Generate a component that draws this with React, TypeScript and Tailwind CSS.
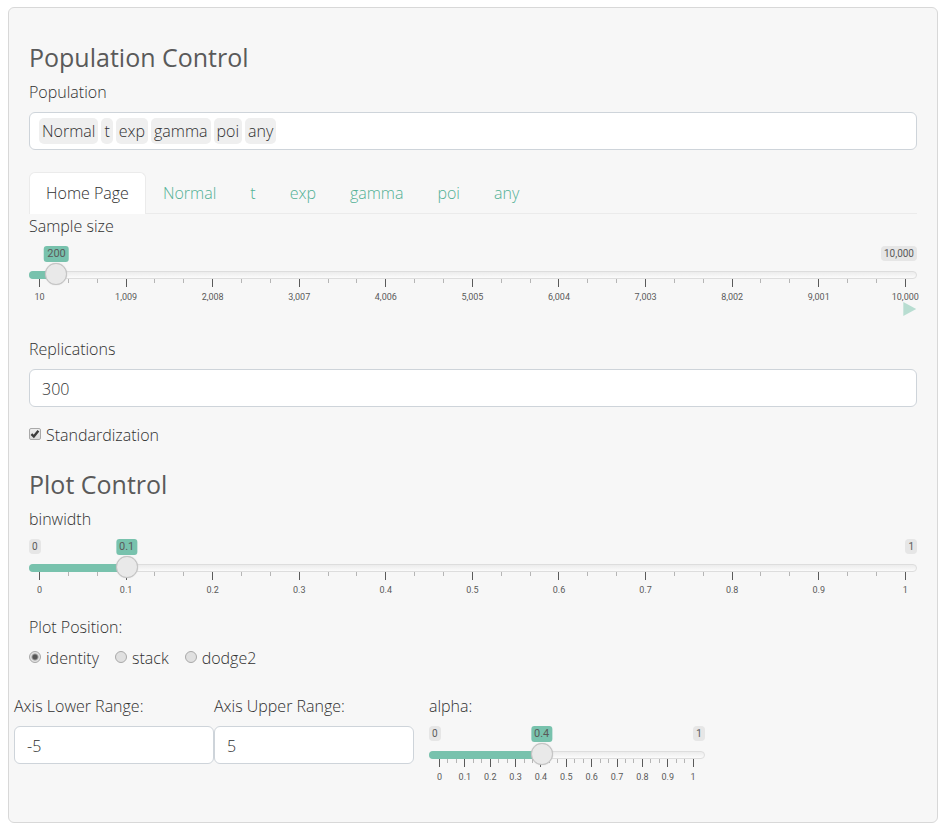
import { useId, useState } from "react";
import type { ReactNode } from "react";

const populations = ["Normal", "t", "exp", "gamma", "poi", "any"];
const tabs = ["Home Page", ...populations];
const tenths = ["0", "0.1", "0.2", "0.3", "0.4", "0.5", "0.6", "0.7", "0.8", "0.9", "1"];
const sampleSizes = [
  "10", "1,009", "2,008", "3,007", "4,006", "5,005",
  "6,004", "7,003", "8,002", "9,001", "10,000",
];

type SliderProps = {
  label: string;
  min: number;
  max: number;
  step: number;
  initial: number;
  marks: string[];
};

function Slider({ label, min, max, step, initial, marks }: SliderProps) {
  const id = useId();
  const [value, setValue] = useState(initial);
  const ratio = (value - min) / (max - min);
  const centre = `calc(11px + (100% - 22px) * ${ratio})`;
  const badge = "rounded bg-[#e6e6e6] px-[3px] font-[Roboto,sans-serif] text-[10px] leading-[15px] font-normal";

  return (
    <div>
      <label htmlFor={id} className="mb-2 block">{label}</label>
      <div className="relative flex h-4 items-start justify-between text-[#5a5a5a]">
        <span className={ratio < 0.05 ? `${badge} invisible` : badge}>{min.toLocaleString("en-US")}</span>
        <span className={ratio > 0.95 ? `${badge} invisible` : badge}>{max.toLocaleString("en-US")}</span>
        <output
          htmlFor={id}
          className="absolute top-0 -translate-x-1/2 rounded-[3px] bg-[#78c2ad] px-[3px] font-[Roboto,sans-serif] text-[11px] leading-4 font-normal"
          style={{ left: centre }}
        >
          {value.toLocaleString("en-US")}
        </output>
      </div>
      <div className="relative z-10 mt-px grid h-[22px] items-center">
        <div className="col-start-1 row-start-1 mt-[2px] h-2 overflow-hidden rounded-lg border border-[#dddddd] bg-linear-to-b from-[#ececec] to-[#fbfbfb]" />
        <div className="col-start-1 row-start-1 mt-[2px] h-2 rounded-l-lg bg-[#78c2ad]" style={{ width: centre }} />
        <input
          id={id}
          type="range"
          min={min}
          max={max}
          step={step}
          value={value}
          onChange={(e) => setValue(Number(e.target.value))}
          className="col-start-1 row-start-1 h-[22px] w-full cursor-pointer appearance-none bg-transparent [&::-webkit-slider-thumb]:size-[22px] [&::-webkit-slider-thumb]:appearance-none [&::-webkit-slider-thumb]:rounded-full [&::-webkit-slider-thumb]:border [&::-webkit-slider-thumb]:border-[#c4c4c4] [&::-webkit-slider-thumb]:bg-[#e9e9e9] [&::-webkit-slider-thumb]:shadow-[0_0_1px_#bbbbbb]"
        />
      </div>
      <div className="-mt-[6px] flex h-[23px] justify-between pr-[11px] pl-[10px] text-[#5a5a5a]">
        {marks.flatMap((mark, i) => [
          <div key={mark} className="flex w-px flex-col items-center">
            <span className="h-2 w-px shrink-0 bg-[#5a5a5a]" />
            <span className="mt-1 font-[Roboto,sans-serif] text-[9px] leading-3 font-normal">{mark}</span>
          </div>,
          ...(i < marks.length - 1
            ? [1, 2].map((n) => <span key={`${mark}-${n}`} className="h-1 w-px bg-[#b5b5b5]" />)
            : []),
        ])}
      </div>
    </div>
  );
}

function NumberField({ label, initial }: { label: string; initial: string }) {
  const id = useId();
  return (
    <div>
      <label htmlFor={id} className="mb-2 block">{label}</label>
      <input
        id={id}
        type="text"
        inputMode="numeric"
        defaultValue={initial}
        className="h-[38px] w-full rounded-md border border-[#ced4da] bg-white px-3 pt-[2px]"
      />
    </div>
  );
}

function Heading({ children }: { children: ReactNode }) {
  return <h3 className="mb-[7px] text-[25px] leading-8 font-normal text-[#5a5a5a]">{children}</h3>;
}

export default function App() {
  const [tab, setTab] = useState("Home Page");
  const [checked, setChecked] = useState(true);
  const [position, setPosition] = useState("identity");

  return (
    <main className="pt-[7px] pr-[11px] pb-2 pl-2 font-['Open_Sans',sans-serif] text-base leading-6 font-light text-[#303030]">
      <form className="rounded-md border border-[#d8d8d8] bg-[#f7f7f7] px-5 pt-[33px] pb-10">
        <Heading>Population Control</Heading>

        <label htmlFor="population" className="mb-2 block">Population</label>
        <div className="flex h-[38px] items-center gap-[3px] rounded-md border border-[#ced4da] bg-white px-[9px]">
          {populations.map((name) => (
            <span key={name} className="rounded-[5px] bg-[#efefef] px-[3px] leading-[26px]">{name}</span>
          ))}
          <input id="population" type="text" className="min-w-0 flex-1 outline-none" />
        </div>

        <div role="tablist" className="mt-[22px] flex border-b border-[#ebebeb]">
          {tabs.map((name) => (
            <button
              key={name}
              type="button"
              role="tab"
              aria-selected={tab === name}
              onClick={() => setTab(name)}
              className={
                tab === name
                  ? "-mb-px rounded-t-md border border-b-0 border-[#ebebeb] bg-white px-4 pt-2 pb-[9px]"
                  : "px-[17px] pt-[9px] pb-2 text-[#52b095]"
              }
            >
              {name}
            </button>
          ))}
        </div>

        <Slider label="Sample size" min={10} max={10000} step={10} initial={200} marks={sampleSizes} />
        <div className="flex h-[35px] items-start justify-end">
          <button type="button" aria-label="Play" className="text-[#b8ddd1]">
            <svg viewBox="0 0 14 14" className="block size-[14px]" fill="currentColor" aria-hidden="true">
              <path d="M0.3 0 L13.2 7 L0.3 14 Z" />
            </svg>
          </button>
        </div>

        <NumberField label="Replications" initial="300" />

        <label className="mt-4 flex w-fit items-center gap-[5px]">
          <span className="-mt-[3px] grid size-3">
            <input
              type="checkbox"
              checked={checked}
              onChange={(e) => setChecked(e.target.checked)}
              className="peer col-start-1 row-start-1 size-3 appearance-none rounded-[2px] border border-[#a9a9a9] bg-linear-to-b from-[#eeeeee] to-[#dcdcdc]"
            />
            <svg viewBox="0 0 12 12" className="pointer-events-none invisible col-start-1 row-start-1 size-3 peer-checked:visible" fill="none" stroke="#3c3c3c" strokeWidth="2.4" aria-hidden="true">
              <path d="M2.4 6.2 L4.8 8.4 L9.4 2.8" />
            </svg>
          </span>
          Standardization
        </label>

        <div className="mt-[21px]">
          <Heading>Plot Control</Heading>
        </div>
        <Slider label="binwidth" min={0} max={1} step={0.1} initial={0.1} marks={tenths} />

        <fieldset className="mt-5">
          <legend>Plot Position:</legend>
          <div className="mt-[7px] flex gap-4">
            {["identity", "stack", "dodge2"].map((name) => (
              <label key={name} className="flex items-center gap-[5px]">
                <input
                  type="radio"
                  name="position"
                  checked={position === name}
                  onChange={() => setPosition(name)}
                  className="-mt-[3px] size-3 appearance-none rounded-full border border-[#a9a9a9] bg-[#e0e0e0] checked:bg-[radial-gradient(circle,#555555_2px,#e2e2e2_4px)]"
                />
                {name}
              </label>
            ))}
          </div>
        </fieldset>

        <div className="-mx-[15px] mt-6 flex">
          <div className="w-[200px]">
            <NumberField label="Axis Lower Range:" initial="-5" />
          </div>
          <div className="w-[200px]">
            <NumberField label="Axis Upper Range:" initial="5" />
          </div>
          <div className="w-1/3 px-[15px]">
            <Slider label="alpha:" min={0} max={1} step={0.1} initial={0.4} marks={tenths} />
          </div>
        </div>
      </form>
    </main>
  );
}
